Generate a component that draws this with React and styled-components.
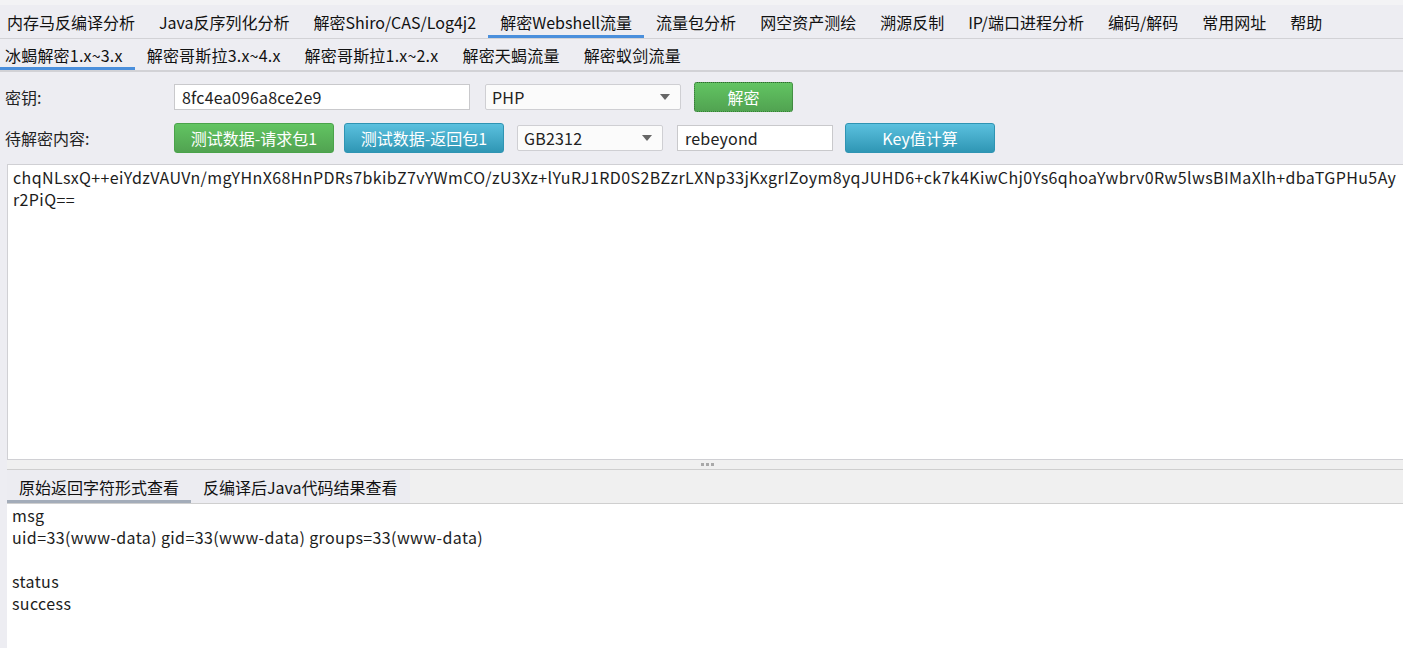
import React, { useState } from 'react';
import styled, { createGlobalStyle } from 'styled-components';

const FONT = `"Microsoft YaHei", "Noto Sans CJK SC", sans-serif`;

const GlobalStyle = createGlobalStyle`
  html, body {
    margin: 0;
    padding: 0;
    background: #ededf2;
    font-family: ${FONT};
    overflow: hidden;
  }
`;

const mainTabs = [
  '内存马反编译分析',
  'Java反序列化分析',
  '解密Shiro/CAS/Log4j2',
  '解密Webshell流量',
  '流量包分析',
  '网空资产测绘',
  '溯源反制',
  'IP/端口进程分析',
  '编码/解码',
  '常用网址',
  '帮助',
];

const subTabs = ['冰蝎解密1.x~3.x', '解密哥斯拉3.x~4.x', '解密哥斯拉1.x~2.x', '解密天蝎流量', '解密蚁剑流量'];

const cipherLines = [
  'chqNLsxQ++eiYdzVAUVn/mgYHnX68HnPDRs7bkibZ7vYWmCO/zU3Xz+lYuRJ1RD0S2BZzrLXNp33jKxgrIZoym8yqJUHD6+ck7k4KiwChj0Ys6qhoaYwbrv0Rw5lwsBIMaXlh+dbaTGPHu5Ay',
  'r2PiQ==',
];

const resultLines = ['msg', 'uid=33(www-data) gid=33(www-data) groups=33(www-data)', '', 'status', 'success'];

const App = () => {
  const [mainTab, setMainTab] = useState(3);
  const [subTab, setSubTab] = useState(0);
  const [resultTab, setResultTab] = useState(0);

  return (
    <Page>
      <GlobalStyle />
      <MenuBar>
        {mainTabs.map((t, i) => (
          <MenuTab key={t} active={i === mainTab} onClick={() => setMainTab(i)}>{t}</MenuTab>
        ))}
      </MenuBar>
      <SubBar>
        {subTabs.map((t, i) => (
          <SubTab key={t} active={i === subTab} onClick={() => setSubTab(i)}>{t}</SubTab>
        ))}
      </SubBar>

      <Form>
        <FormRow>
          <Label>密钥:</Label>
          <TextInput width={296} defaultValue="8fc4ea096a8ce2e9" />
          <Select width={196} ml={15}>
            <span>PHP</span>
            <Caret />
          </Select>
          <Button variant="green" width={99} ml={13} focused>解密</Button>
        </FormRow>
        <FormRow>
          <Label>待解密内容:</Label>
          <Button variant="green" width={160}>测试数据-请求包1</Button>
          <Button variant="blue" width={160} ml={10}>测试数据-返回包1</Button>
          <Select width={146} ml={13}>
            <span>GB2312</span>
            <Caret />
          </Select>
          <TextInput width={156} ml={14} defaultValue="rebeyond" />
          <Button variant="blue" width={150} ml={12}>Key值计算</Button>
        </FormRow>
      </Form>

      <Workspace>
        <CipherBox>
          {cipherLines.map((l, i) => <TextLine key={i}>{l}</TextLine>)}
        </CipherBox>
        <Splitter>
          <Grip><i /><i /><i /></Grip>
        </Splitter>
        <ResultHeader>
          <ResultTabs>
            {['原始返回字符形式查看', '反编译后Java代码结果查看'].map((t, i) => (
              <ResultTab key={t} active={i === resultTab} onClick={() => setResultTab(i)}>{t}</ResultTab>
            ))}
          </ResultTabs>
        </ResultHeader>
        <ResultBox>
          {resultLines.map((l, i) => <TextLine key={i}>{l || '\u00a0'}</TextLine>)}
        </ResultBox>
      </Workspace>
    </Page>
  );
};

export default App;

const Page = styled.div`
  width: 1403px;
  height: 648px;
  display: flex;
  flex-direction: column;
  overflow: hidden;
  color: #1a1a1a;
`;

const MenuBar = styled.div`
  display: flex;
  height: 33px;
  margin-top: 5px;
  border-bottom: 1px solid #d2d2d6;
  box-shadow: 0 -5px 0 #f3f3f5;
`;

const MenuTab = styled.div`
  display: flex;
  align-items: center;
  padding: 3px 12px 0;
  font-size: 16px;
  color: #111;
  cursor: pointer;
  white-space: nowrap;
  border-bottom: 3px solid ${(p) => (p.active ? '#4a8fdc' : 'transparent')};
  &:first-child {
    padding-left: 7px;
  }
`;

const SubBar = styled.div`
  display: flex;
  height: 31px;
  border-bottom: 2px solid #d2d2d6;
`;

const SubTab = styled.div`
  display: flex;
  align-items: center;
  padding: 3px 12px 0;
  font-size: 16px;
  letter-spacing: 0.2px;
  color: #111;
  white-space: nowrap;
  cursor: pointer;
  border-bottom: 3px solid ${(p) => (p.active ? '#4a8fdc' : 'transparent')};
  &:first-child {
    padding-left: 5px;
  }
`;

const Form = styled.div`
  display: flex;
  flex-direction: column;
  gap: 11px;
  padding: 10px 0 11px 5px;
`;

const FormRow = styled.div`
  display: flex;
  align-items: center;
  height: 30px;
`;

const Label = styled.div`
  width: 169px;
  font-size: 16px;
  color: #222;
`;

const TextInput = styled.input`
  box-sizing: border-box;
  width: ${(p) => p.width}px;
  height: 26px;
  margin-left: ${(p) => p.ml || 0}px;
  border: 1px solid #c9c9cc;
  background: #fff;
  padding: 0 7px;
  font-family: ${FONT};
  font-size: 16px;
  letter-spacing: 0.2px;
  color: #222;
  outline: none;
`;

const Select = styled.div`
  box-sizing: border-box;
  width: ${(p) => p.width}px;
  height: 26px;
  margin-left: ${(p) => p.ml || 0}px;
  border: 1px solid #cfcfd3;
  border-radius: 2px;
  background: #fbfbfb;
  padding: 0 18px 0 6px;
  display: flex;
  align-items: center;
  justify-content: space-between;
  font-size: 16px;
  letter-spacing: 0.2px;
  color: #222;
`;

const Caret = styled.span`
  width: 0;
  height: 0;
  border-left: 5px solid transparent;
  border-right: 5px solid transparent;
  border-top: 6px solid #666;
  margin-right: -8px;
`;

const Button = styled.button`
  box-sizing: border-box;
  width: ${(p) => p.width}px;
  height: 30px;
  margin-left: ${(p) => p.ml || 0}px;
  padding: 0;
  border-radius: 3px;
  font-family: ${FONT};
  font-size: 16px;
  color: #fff;
  cursor: pointer;
  border: 1px ${(p) => (p.focused ? 'dotted' : 'solid')}
    ${(p) => (p.focused ? '#2f6b2f' : p.variant === 'green' ? '#4aa34a' : '#2f94b3')};
  background: ${(p) =>
    p.variant === 'green'
      ? 'linear-gradient(#62c462, #51a351)'
      : 'linear-gradient(#5bc0de, #2f96b4)'};
  outline: none;
`;

const Workspace = styled.div`
  flex: 1;
  display: flex;
  flex-direction: column;
  padding-left: 7px;
  min-height: 0;
`;

const CipherBox = styled.div`
  box-sizing: border-box;
  height: 296px;
  background: #fff;
  border: 1px solid #d0d0d4;
  border-right: 0;
  padding: 1px 5px;
  overflow: hidden;
`;

const TextLine = styled.div`
  font-size: 16px;
  line-height: 22px;
  letter-spacing: 0.38px;
  color: #1c1c1c;
  white-space: pre;
`;

const Splitter = styled.div`
  height: 9px;
  background: #f0f0f0;
  border-bottom: 1px solid #cfcfcf;
  display: flex;
  justify-content: center;
  align-items: center;
`;

const Grip = styled.div`
  display: flex;
  gap: 2px;
  margin-left: 5px;
  i {
    width: 3px;
    height: 3px;
    background: #a9a9a9;
  }
`;

const ResultHeader = styled.div`
  height: 33px;
  background: #f0f0f0;
  border-bottom: 1px solid #cfcfcf;
  display: flex;
`;

const ResultTabs = styled.div`
  display: flex;
  background: #ececf1;
`;

const ResultTab = styled.div`
  display: flex;
  align-items: center;
  padding: 3px 12px 0;
  font-size: 16px;
  color: #111;
  white-space: nowrap;
  cursor: pointer;
  border-bottom: 3px solid ${(p) => (p.active ? '#a3acb9' : 'transparent')};
`;

const ResultBox = styled.div`
  flex: 1;
  background: #fff;
  padding: 0 5px;
`;
